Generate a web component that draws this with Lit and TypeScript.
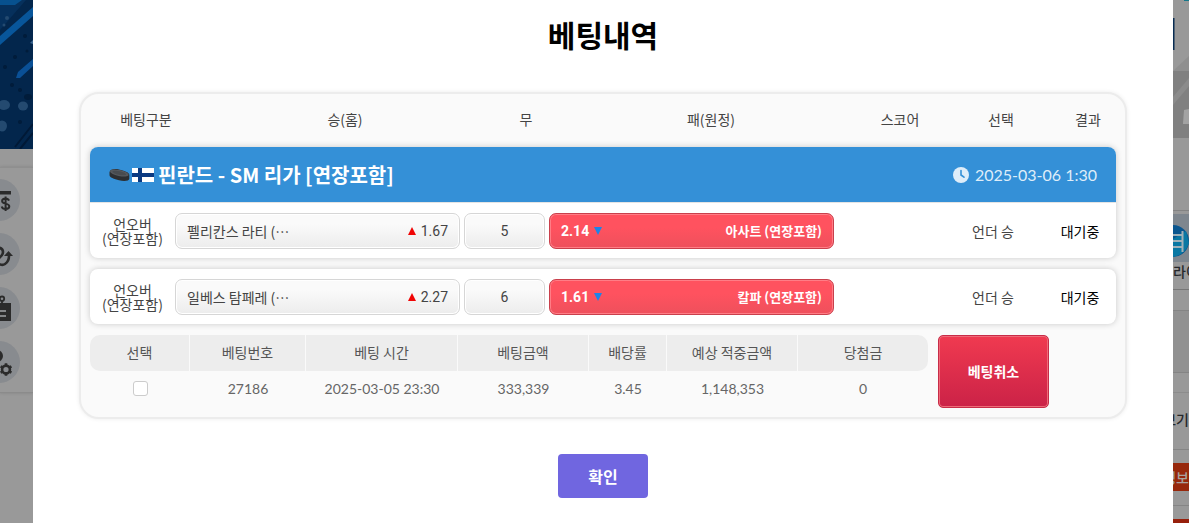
import { LitElement, html, css, svg } from "lit";
import { customElement, property, state } from "lit/decorators.js";
import { classMap } from "lit/directives/class-map.js";

interface Bet {
  market: string;
  home: string;
  homeOdds: string;
  line: string;
  away: string;
  awayOdds: string;
  pick: string;
  result: string;
}

const BETS: Bet[] = [
  { market: "언오버", home: "펠리칸스 라티 (⋯", homeOdds: "1.67", line: "5", away: "아사트 (연장포함)", awayOdds: "2.14", pick: "언더 승", result: "대기중" },
  { market: "언오버", home: "일베스 탐페레 (⋯", homeOdds: "2.27", line: "6", away: "칼파 (연장포함)", awayOdds: "1.61", pick: "언더 승", result: "대기중" },
];

/** Dimmed strip of the page left of the dialog: banner and round menu. */
@customElement("page-left")
export class PageLeft extends LitElement {
  static styles = css`
    :host { display: block; overflow: hidden; background: #999; }
    .banner { display: block; width: 100%; height: 149px; }
    .menu {
      display: flex; flex-direction: column; gap: 12px;
      margin-top: 18px; padding: 11px 0 9px;
      border-top: 1px solid #8f8f8f; border-bottom: 1px solid #8b8b8b;
      box-shadow: 0 0 3px rgba(0, 0, 0, 0.15);
    }
    .item { display: flex; justify-content: flex-end; width: 20px; height: 42px; }
    .item svg { flex: none; display: block; }
  `;

  private icons = [
    svg`<path d="M4 12h30v3.500H4z"/><path d="M32 21.600c-.6-1.500-1.900-2.200-3.400-2.200-2.100 0-3.500 1-3.500 2.600 0 3.500 7.200 1.700 7.200 5.300 0 1.700-1.500 2.800-3.700 2.800-2 0-3.400-.9-3.900-2.600M28.600 17.500v14.500" fill="none" stroke="#2b2b2b" stroke-width="2"/>`,
    svg`<path d="M14 17c4-4 12-3 12 2s-6 6-6 9 5 5 8 3 4-5 4-8" fill="none" stroke="#2b2b2b" stroke-width="2.600"/><path d="M27 23l4.500-5 4.500 5z"/>`,
    svg`<path d="M6 16h28v18H6z"/><path d="M25 9.500a2.200 2.200 0 1 1 0 4.400a2.200 2.200 0 0 1 0-4.400zM25 14v4" fill="none" stroke="#2b2b2b" stroke-width="1.800"/><path d="M15 24h14M15 29h14" stroke="#a3a5a8" stroke-width="1.500"/>`,
    svg`<circle cx="20" cy="15" r="6"/><path d="M8 32c0-7 6-10 13-9l-1 9z"/><circle cx="29" cy="28.500" r="3.900" fill="none" stroke="#2b2b2b" stroke-width="2.600"/><path d="M29 22.300v2.400M29 32.300v2.400M23.600 25.400l2.100 1.200M32.300 30.400l2.100 1.200M23.600 31.600l2.100-1.200M32.300 26.600l2.100-1.200" stroke="#2b2b2b" stroke-width="2.600"/>`,
  ];

  render() {
    return html`
      <svg class="banner" viewBox="0 0 33 149" preserveAspectRatio="none" aria-hidden="true">
        <rect width="33" height="149" fill="#03264c" />
        <path d="M0 0h26L0 30z" fill="#06305c" />
        <path d="M0 0h22L15 5H0z" fill="#07518f" />
        <path d="M0 36L33 7v9L0 45z" fill="#08569b" />
        <path d="M16 78l2-6L33 59v7L20 78z" fill="#0a5096" />
        <path d="M30 43l3-3v4z" fill="#3c6690" />
        <g fill="#244a70">
          <ellipse cx="4" cy="105" rx="6" ry="5" /><ellipse cx="23" cy="106" rx="5" ry="4.500" />
          <ellipse cx="2" cy="126" rx="5" ry="5.500" /><circle cx="7" cy="18" r="2" /><circle cx="4" cy="25" r="1.500" />
        </g>
        <g fill="#011c3a">
          <circle cx="15" cy="57" r="2" /><circle cx="27" cy="51" r="1.500" /><circle cx="12" cy="85" r="2" />
          <ellipse cx="28" cy="97" rx="4" ry="3" /><circle cx="20" cy="122" r="2" /><circle cx="5" cy="67" r="2" />
          <circle cx="25" cy="36" r="2" /><circle cx="20" cy="90" r="2" />
        </g>
        <path d="M15 147l18-23M20 149l13-16" stroke="#011936" stroke-width="2" />
      </svg>
      <nav class="menu">
        ${this.icons.map((i) => html`<div class="item">
          <svg width="42" height="42" viewBox="0 0 42 42" fill="#2b2b2b" aria-hidden="true">
            <circle cx="21" cy="21" r="21" fill="#888b8f" /><g transform="translate(-1 0)">${i}</g>
          </svg></div>`)}
      </nav>
    `;
  }
}

/** Dimmed strip of the page right of the dialog. */
@customElement("page-right")
export class PageRight extends LitElement {
  static styles = css`
    :host {
      display: flex; flex-direction: column; overflow: hidden;
      background: #999; color: #26282b;
      font: 500 14px/20px "Noto Sans CJK KR", sans-serif; white-space: nowrap;
    }
    .art { display: block; flex: none; width: 16px; height: 262px; }
    .name { height: 27px; line-height: 18px; border-bottom: 1px solid #777; }
    .gap { height: 20px; border-bottom: 1px solid #848484; }
    .box { height: 61px; background: #919191; border-bottom: 1px solid #848484; }
    .space { height: 19px; border-bottom: 1px solid #8c8c8c; }
    .more { display: flex; justify-content: flex-end; height: 56px; line-height: 52px; border-bottom: 1px solid #858585; }
    .tag { display: flex; justify-content: flex-end; height: 28px; margin-top: 13px; background: #97280c; color: #a9a29f; line-height: 28px; }
    .rule { height: 14px; border-bottom: 1px solid #858585; }
    .foot { height: 4px; margin-top: 13px; background: #97200c; }
  `;

  render() {
    return html`
      <svg class="art" viewBox="0 0 16 262" aria-hidden="true">
        <path d="M11 0h5v1h-5z" fill="#14778a" />
        <path d="M0 18h1.500v32H0z" fill="#082c52" />
        <path d="M0 71L16 56v15z" fill="#8f8f8f" />
        <path d="M0 71h16v67H0z" fill="#808080" />
        <path d="M0 97L16 78v8L0 105z" fill="#8b8b8b" />
        <path d="M11 110l5-1v15h-6z" fill="#a3a3a3" />
        <path d="M0 210h16v1H0z" fill="#838383" />
        <path d="M0 214h16v48H0z" fill="#7e868e" />
        <circle cx="0" cy="241" r="16" fill="#0a568f" />
        <path d="M0 257q12-2 16-14l-3-12-13 8z" fill="#0a78a3" />
        <path d="M0 235h9M0 241h9M0 247h9M9.500 231v21" stroke="#9fb0b8" stroke-width="2" fill="none" />
      </svg>
      <div class="name">라이브</div>
      <div class="gap"></div>
      <div class="box"></div>
      <div class="space"></div>
      <div class="more"><span>보기</span></div>
      <div class="tag"><span>정보</span></div>
      <div class="rule"></div>
      <div class="foot"></div>
    `;
  }
}

/** One bet: market, the three odds boxes, score, pick and result. */
@customElement("bet-row")
export class BetRow extends LitElement {
  @property({ attribute: false }) bet!: Bet;
  @state() private side: "home" | "away" = "away";

  static styles = css`
    :host {
      box-sizing: border-box; padding-top: 1px;
      display: grid; grid-template-columns: 85fr 659fr 108fr 102fr 72fr;
      align-items: center; height: 55px;
      font: 14px/14px "Noto Sans CJK KR", sans-serif; color: #444; text-align: center;
    }
    .odds { display: grid; grid-template-columns: 285fr 81fr 285fr; gap: 4px; }
    .box {
      display: flex; align-items: center; justify-content: space-between;
      height: 36px; padding: 0 11px; min-width: 0;
      border: 1px solid #d6d6d6; border-radius: 7px;
      background: linear-gradient(#fafafa 30%, #ececec);
      box-shadow: inset 0 0 0 1px #fff;
      font: 14px/20px "Noto Sans CJK KR", sans-serif; color: #444; white-space: nowrap;
    }
    .line { justify-content: center; }
    .num { font-family: Roboto, sans-serif; }
    .rate { display: flex; align-items: center; gap: 5px; font-family: Roboto, sans-serif; font-size: 14px; }
    .on {
      border-color: #c9404c; color: #fff; font-size: 13px; font-weight: 700;
      background: linear-gradient(#ff525f 40%, #ee505c);
      box-shadow: inset 0 0 0 1px #ff7d86;
    }
    .result { color: #000; }
  `;

  render() {
    const b = this.bet;
    return html`
      <div>${b.market}<br />(연장포함)</div>
      <div class="odds">
        <button class=${classMap({ box: true, on: this.side === "home" })} @click=${() => (this.side = "home")}>
          <span>${b.home}</span>
          <span class="rate"><svg width="8" height="8" viewBox="0 0 8 8"><path d="M4 0l4 8H0z" fill="#f00505" /></svg>${b.homeOdds}</span>
        </button>
        <button class="box line"><span class="num">${b.line}</span></button>
        <button class=${classMap({ box: true, on: this.side === "away" })} @click=${() => (this.side = "away")}>
          <span class="rate">${b.awayOdds}<svg width="8" height="8" viewBox="0 0 8 8"><path d="M4 8L0 0h8z" fill="#1c84e8" /></svg></span>
          <span>${b.away}</span>
        </button>
      </div>
      <div></div>
      <div>${b.pick}</div>
      <div class="result">${b.result}</div>
    `;
  }
}

@customElement("app-root")
export class AppRoot extends LitElement {
  static styles = css`
    :host {
      display: grid; grid-template-columns: 33px minmax(0, 1fr) 16px;
      min-height: 100vh; background: #999;
      font: 14px/20px "Noto Sans CJK KR", sans-serif; color: #444;
    }
    .dialog { display: flex; flex-direction: column; align-items: center; padding: 12px 46px 24px; background: #fff; }
    .title { margin: 0 0 36px; font-size: 30px; line-height: 44px; font-weight: 700; color: #000; }
    .panel {
      box-sizing: border-box; width: 100%; padding: 0 9px 9px;
      border: 2px solid #ececec; border-radius: 20px; background: #fafafa;
      box-shadow: 0 0 4px rgba(0, 0, 0, 0.08);
    }
    .heads {
      display: grid; grid-template-columns: 112fr 286fr 76fr 294fr 84fr 118fr 56fr;
      box-sizing: border-box; height: 53px; padding-bottom: 4px; align-items: center; text-align: center;
    }
    .card { margin-bottom: 11px; border-radius: 8px; background: #fff; box-shadow: 0 0 6px rgba(0, 0, 0, 0.2); overflow: hidden; }
    .league { display: flex; align-items: center; height: 55px; padding: 0 19px; border-bottom: 1px solid #e4e4e4; background: #3490d7; background-clip: padding-box; color: #fff; }
    .league h2 { flex: 1; margin: 0; padding-left: 4px; font-size: 20px; line-height: 28px; font-weight: 700; }
    .flag { margin-left: 2px; }
    .when { display: flex; align-items: center; gap: 6px; font: 16px/20px Lato, sans-serif; color: #deedf9; }
    .foot { display: grid; grid-template-columns: 838fr 111px 57fr; gap: 10px; }
    .sum { width: 100%; table-layout: fixed; border-collapse: separate; border-spacing: 0; }
    .sum th, .sum td { box-sizing: border-box; height: 36px; padding: 0 0 2px; text-align: center; }
    .sum th { font-weight: 400; color: #555; background: #ededed; border-right: 1px solid #fafafa; }
    .sum th:first-child { border-radius: 10px 0 0 10px; }
    .sum th:last-child { border-right: 0; border-radius: 0 10px 10px 0; }
    .sum td { font-family: Lato, sans-serif; color: #666; }
    .c1 { width: 100px; } .c2 { width: 116px; } .c3 { width: 152px; } .c4 { width: 131px; }
    .c5 { width: 78px; } .c6 { width: 131px; }
    .check {
      appearance: none; display: block; box-sizing: border-box; width: 15px; height: 15px;
      margin: 0 auto; border: 1px solid #ccc; border-radius: 3px; background: #fff;
    }
    .check:checked { background: #3490d7; }
    .cancel {
      height: 73px; padding: 0 0 2px; border: 1px solid #c72c48; border-radius: 5px;
      background: linear-gradient(#f03a50, #cb2247); box-shadow: inset 0 0 0 1px #ee6a78;
      font: 700 14px/20px "Noto Sans CJK KR", sans-serif; color: #fff;
    }
    .ok {
      width: 90px; height: 44px; margin-top: 35px; padding: 0; border: 0; border-radius: 4px; background: #7066e0;
      font: 700 16px/24px "Noto Sans CJK KR", sans-serif; color: #fff;
    }
  `;

  render() {
    return html`
      <page-left></page-left>
      <main class="dialog">
        <h1 class="title">베팅내역</h1>
        <section class="panel">
          <div class="heads">
            ${["베팅구분", "승(홈)", "무", "패(원정)", "스코어", "선택", "결과"].map((t) => html`<span>${t}</span>`)}
          </div>
          <div class="card">
            <header class="league">
              <svg width="21" height="14" viewBox="0 0 21 14" aria-hidden="true">
                <path d="M.5 4C1 1.500 5 .5 10 1.500s10 3 10.300 5.200v4C20 13 15 13.500 10 12.200S.5 9.500.5 7z" fill="#2c2e31" />
                <ellipse cx="10.300" cy="5" rx="9.600" ry="3" transform="rotate(12 10.300 5)" fill="#55585c" />
                <ellipse cx="10.300" cy="5" rx="7" ry="1.900" transform="rotate(12 10.300 5)" fill="#484b4f" />
              </svg>
              <svg class="flag" width="22" height="14" viewBox="0 0 22 14" aria-hidden="true">
                <path d="M0 0h22v14H0z" fill="#fff" /><path d="M6 0h4v14H6zM0 5h22v4H0z" fill="#0b3a82" />
              </svg>
              <h2>핀란드 - SM 리가 [연장포함]</h2>
              <span class="when">
                <svg width="16" height="16" viewBox="0 0 16 16" aria-hidden="true">
                  <circle cx="8" cy="8" r="8" fill="#deedf9" />
                  <path d="M8 3.500V8l3 2.200" fill="none" stroke="#3490d7" stroke-width="1.600" stroke-linecap="round" />
                </svg>
                <time>2025-03-06 1:30</time>
              </span>
            </header>
            <bet-row .bet=${BETS[0]}></bet-row>
          </div>
          <div class="card"><bet-row .bet=${BETS[1]}></bet-row></div>
          <div class="foot">
            <table class="sum">
              <thead>
                <tr>
                  <th class="c1">선택</th><th class="c2">베팅번호</th><th class="c3">베팅 시간</th><th class="c4">베팅금액</th>
                  <th class="c5">배당률</th><th class="c6">예상 적중금액</th><th>당첨금</th>
                </tr>
              </thead>
              <tbody>
                <tr>
                  <td><input class="check" type="checkbox" aria-label="선택" /></td>
                  <td>27186</td><td>2025-03-05 23:30</td><td>333,339</td><td>3.45</td><td>1,148,353</td><td>0</td>
                </tr>
              </tbody>
            </table>
            <button class="cancel">베팅취소</button>
          </div>
        </section>
        <button class="ok">확인</button>
      </main>
      <page-right></page-right>
    `;
  }
}
